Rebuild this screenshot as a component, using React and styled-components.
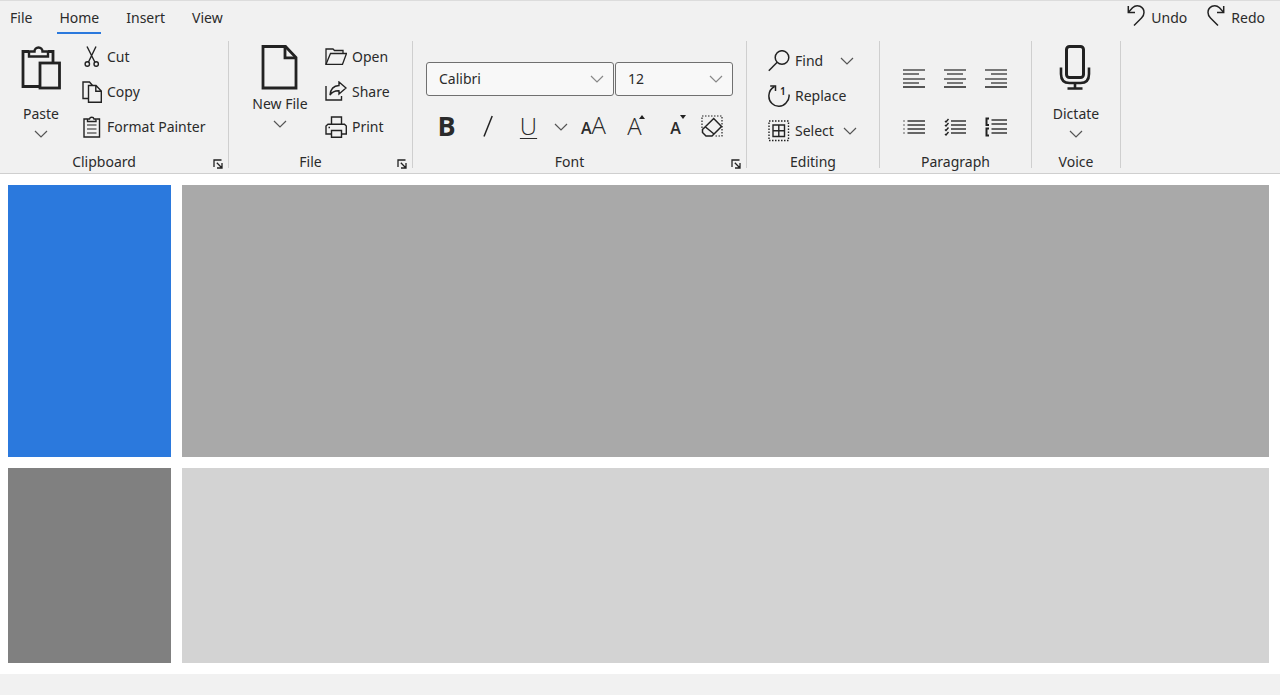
import React from "react";
import styled, { createGlobalStyle } from "styled-components";

const GlobalStyle = createGlobalStyle`
    *{
        box-sizing: border-box;
    }

    body{
        margin: 0;
        background: #f1f1f1;
        color: #2b2b2b;
        font-family: "Noto Sans", "Open Sans", sans-serif;
        font-size: 14px;
        line-height: 20px;
    }

    button, select{
        font: inherit;
        color: inherit;
        margin: 0;
        padding: 0;
        border: 0;
        background: none;
    }

    button{
        cursor: pointer;
    }
`;

function Svg({ w, h, sw = 1.5, children, ...rest }){
    return (
        <Drawing width={w} height={h} viewBox={`0 0 ${w} ${h}`} fill="none" stroke="#222" strokeWidth={sw} aria-hidden="true" {...rest}>
            {children}
        </Drawing>
    );
}

const Chevron = ({ color = "#555" }) => (
    <Svg w={14} h={8} sw={1.2} stroke={color}>
        <path d="M1 1L7 7L13 1" />
    </Svg>
);

const PasteIcon = () => (
    <Svg w={42} h={46} sw={2.8}>
        <path d="M19 42.5H3V7.5H9M28 7.5H33V18" />
        <path d="M9 7.5V12.5H28V7.5H22.5A4 4 0 0 0 14.5 7.5Z" strokeWidth="2.4" />
        <rect x="20" y="19" width="19.5" height="25" />
    </Svg>
);

const CutIcon = () => (
    <Svg w={20} h={22} sw={1.4}>
        <path d="M5 0.5L12.8 16M14 0.5L6.5 16" />
        <circle cx="5.3" cy="18" r="2.2" />
        <circle cx="14.2" cy="18" r="2.2" />
    </Svg>
);

const CopyIcon = () => (
    <Svg w={20} h={22} sw={1.4}>
        <path d="M6.5 17.5H1V1H7.5L10.5 4.5" />
        <path d="M6.5 4.5H14L19.3 10V21.3H6.5ZM13.8 4.5V10.2H19.3" />
    </Svg>
);

const FormatIcon = () => (
    <Svg w={20} h={22} sw={1.4}>
        <path d="M5 3H2V21H17.5V3H14.5" />
        <path d="M5.5 3V5.500H14V3H12A2.3 2.3 0 0 0 7.5 3Z" />
        <path d="M5 9H14.5M5 13H14.5M5 17H14.5" stroke="#666" />
    </Svg>
);

const NewFileIcon = () => (
    <Svg w={40} h={46} sw={2.8}>
        <path d="M3 2.5H25.5L36 13.5V44H3Z" />
        <path d="M25 2.5V13.8H36" />
    </Svg>
);

const OpenIcon = () => (
    <Svg w={22} h={22} sw={1.3}>
        <path d="M1 18V3H8L9.5 4.5H18V7.5" />
        <path d="M1 18.3L5.5 7.5H21.5L17.5 18.3Z" />
    </Svg>
);

const ShareIcon = () => (
    <Svg w={22} h={22} sw={1.4}>
        <path d="M1 5V19H16.5V15" />
        <path d="M14 1L21 7L14 13V9.8C9.5 9.6 7 11 5 14C5.5 8 9 4.8 14 4.5Z" />
    </Svg>
);

const PrintIcon = () => (
    <Svg w={22} h={22} sw={1.4}>
        <path d="M6.5 8V1H16.5V8" />
        <path d="M6.5 18H1V10L3 8.2H19.5L21.3 10V18H16.5" />
        <path d="M6.5 14.5H16.5V21.3H6.5Z" />
        <path d="M3.5 11.5H5" />
    </Svg>
);

const FindIcon = () => (
    <Svg w={22} h={22}>
        <circle cx="14" cy="7.5" r="6.8" />
        <path d="M9.2 12.3L0.8 20.8" />
    </Svg>
);

const ReplaceIcon = () => (
    <Svg w={22} h={24}>
        <path d="M6.5 2.5C-0.5 6.5-0.5 15.5 4 19.5C8 23.5 14.5 23 18 19C20.5 16.5 21.5 13.5 21 10.5" />
        <path d="M2.2 2H7.5V7" />
        <text x="12" y="11" fill="#222" stroke="none" fontSize="10" fontWeight="600">1</text>
    </Svg>
);

const SelectIcon = () => (
    <Svg w={22} h={22} sw={1.4}>
        <rect x="1" y="1" width="19.5" height="19.5" strokeDasharray="1.5 1.5" />
        <path d="M5 5H16.5V16.5H5ZM10.8 5V16.5M5 10.8H16.5" />
    </Svg>
);

const ItalicIcon = () => (
    <Svg w={12} h={22}>
        <path d="M2 21.5L10.2 1" />
    </Svg>
);

const EraserIcon = () => (
    <Svg w={22} h={22} sw={1.5}>
        <path d="M1 13V1H21V21H14" strokeWidth="1.2" strokeDasharray="1.5 1.5" />
        <path d="M1.5 14.5L12.7 3.5L20.5 11.5L11 21H5L1.5 17.5ZM4.5 12L13 19" />
    </Svg>
);

const MicIcon = () => (
    <Svg w={34} h={46} sw={3}>
        <rect x="7.500" y="2.5" width="17" height="31" rx="3" />
        <path d="M2 23.5V30Q2 39 10.500 39H21.500Q30 39 30 30V23.5M16 39V44.5M8.500 44.5H23.500" strokeWidth="2.6" />
    </Svg>
);

const UndoIcon = ({ flip }) => (
    <Svg w={18} h={24}>
        <g transform={flip ? "matrix(-1 0 0 1 18 0)" : undefined}>
            <path d="M1.3 2V8.5H8" />
            <path d="M1.5 8.3L5.5 3.8C10-0.5 17 2.5 17 8.5C17 11 16 12.5 14.5 14L7 21.5" />
        </g>
    </Svg>
);

const LauncherIcon = () => (
    <Svg w={10} h={10} sw={1.3}>
        <path d="M1 8V1H8.5M3.8 3.8L8.5 8.5M9 4V9H4" />
    </Svg>
);

// start x of the short lines for each alignment
const shortStart = { left: 1, center: 4, right: 7 };

const AlignIcon = ({ side }) => (
    <Svg w={24} h={20}>
        <path
            d={`M1 2H23M${shortStart[side]} 6H${shortStart[side] + 16}M1 11H23M${shortStart[side]} 15H${shortStart[side] + 16}`}
            stroke="#777"
            strokeWidth="2"
        />
        <path d="M1 19H23" />
    </Svg>
);

const BulletIcon = () => (
    <Svg w={24} h={18} sw={2} stroke="#666">
        <path d="M1 3H3M1 7H3M1 11H3M1 15H3" stroke="#aaa" />
        <path d="M5.5 3H23M5.5 7H23M5.5 11H23M5.5 15H23" />
    </Svg>
);

const CheckListIcon = () => (
    <Svg w={24} h={18} sw={2} stroke="#666">
        <path d="M2 3L3 4L5.5 1M2 7L3 8L5.5 5M2 11.5L3 12.5L5.5 9.5M2 16L3 17L5.5 14" stroke="#222" strokeWidth="1.4" />
        <path d="M8 3H23M8 7H23M8 11H23M8 15H23" />
    </Svg>
);

const SpacingIcon = () => (
    <Svg w={24} h={20} sw={2} stroke="#666">
        <path d="M5 1.5H2.5V8H5M5 11.5H2.5V18.5H5" stroke="#222" />
        <path d="M7.5 3H23M7.5 7H23M7.5 12H23M7.5 16H23" />
    </Svg>
);

const Triangle = ({ down }) => (
    <Svg w={6} h={4} stroke="none" fill="#222">
        <path d={down ? "M0 0H6L3 4Z" : "M0 4H6L3 0Z"} />
    </Svg>
);


function Group({ title, width, launcher, children }){
    return (
        <GroupBox $width={width} aria-label={title}>
            <GroupBody>{children}</GroupBody>
            <GroupFooter>
                <GroupTitle>{title}</GroupTitle>
                {launcher && (
                    <Launcher type="button" aria-label={`${title} options`}>
                        <LauncherIcon />
                    </Launcher>
                )}
            </GroupFooter>
        </GroupBox>
    );
}

function Command({ icon, label, menu }){
    return (
        <SmallButton type="button">
            {icon}
            <CommandLabel $menu={menu}>{label}</CommandLabel>
            {menu && <Chevron />}
        </SmallButton>
    );
}

function Big({ icon, label, tight }){
    return (
        <BigButton type="button" $tight={tight}>
            {icon}
            <span>{label}</span>
            <Chevron />
        </BigButton>
    );
}

function Combo({ label, options, grow }){
    return (
        <ComboBox $grow={grow}>
            <select aria-label={label} defaultValue={options[0]}>
                {options.map((o) => <option key={o}>{o}</option>)}
            </select>
            <Chevron color="#888" />
        </ComboBox>
    );
}

function App(){
    const tabs = ["File", "Home", "Insert", "View"];

    return (
        <Page>
            <GlobalStyle />
            <Header>
                <TopBar>
                    <Tabs>
                        {tabs.map((t) => (
                            <Tab type="button" key={t} $active={t === "Home"}>{t}</Tab>
                        ))}
                    </Tabs>
                    <History>
                        <HistoryButton type="button"><UndoIcon />Undo</HistoryButton>
                        <HistoryButton type="button"><UndoIcon flip />Redo</HistoryButton>
                    </History>
                </TopBar>

                <Ribbon>
                    <Group title="Clipboard" width={229} launcher>
                        <BigSlot $width={82}><Big icon={<PasteIcon />} label="Paste" /></BigSlot>
                        <Commands>
                            <Command icon={<CutIcon />} label="Cut" />
                            <Command icon={<CopyIcon />} label="Copy" />
                            <Command icon={<FormatIcon />} label="Format Painter" />
                        </Commands>
                    </Group>

                    <Group title="File" width={184} launcher>
                        <BigSlot $width={96} $left={6}><Big icon={<NewFileIcon />} label="New File" tight /></BigSlot>
                        <Commands>
                            <Command icon={<OpenIcon />} label="Open" />
                            <Command icon={<ShareIcon />} label="Share" />
                            <Command icon={<PrintIcon />} label="Print" />
                        </Commands>
                    </Group>

                    <Group title="Font" width={334} launcher>
                        <FontPanel>
                            <ComboRow>
                                <Combo label="Font family" options={["Calibri", "Arial", "Georgia"]} grow={188} />
                                <Combo label="Font size" options={["12", "14", "16"]} grow={118} />
                            </ComboRow>
                            <ToolRow>
                                <Tool type="button" aria-label="Bold"><Glyph $size={27} $weight={700}>B</Glyph></Tool>
                                <Tool type="button" aria-label="Italic"><ItalicIcon /></Tool>
                                <Tool type="button" aria-label="Underline"><Glyph $line>U</Glyph></Tool>
                                <Tool type="button" aria-label="Underline styles" $menu><Chevron /></Tool>
                                <Tool type="button" aria-label="Change case">
                                    <Glyph><SmallGlyph>A</SmallGlyph>A</Glyph>
                                </Tool>
                                <Tool type="button" aria-label="Grow font">
                                    <Glyph>A</Glyph>
                                    <Corner><Triangle /></Corner>
                                </Tool>
                                <Tool type="button" aria-label="Shrink font">
                                    <Glyph><SmallGlyph>A</SmallGlyph></Glyph>
                                    <Corner><Triangle down /></Corner>
                                </Tool>
                                <Tool type="button" aria-label="Clear formatting" $width={32}><EraserIcon /></Tool>
                            </ToolRow>
                        </FontPanel>
                    </Group>

                    <Group title="Editing" width={133}>
                        <Commands $left={21} $top={4}>
                            <Command icon={<FindIcon />} label="Find" menu />
                            <Command icon={<ReplaceIcon />} label="Replace" />
                            <Command icon={<SelectIcon />} label="Select" menu />
                        </Commands>
                    </Group>

                    <Group title="Paragraph" width={152}>
                        <ToolGrid>
                            <Tool type="button" aria-label="Align left"><AlignIcon side="left" /></Tool>
                            <Tool type="button" aria-label="Center"><AlignIcon side="center" /></Tool>
                            <Tool type="button" aria-label="Align right"><AlignIcon side="right" /></Tool>
                            <Tool type="button" aria-label="Bullets"><BulletIcon /></Tool>
                            <Tool type="button" aria-label="Checklist"><CheckListIcon /></Tool>
                            <Tool type="button" aria-label="Line spacing"><SpacingIcon /></Tool>
                        </ToolGrid>
                    </Group>

                    <Group title="Voice" width={89}>
                        <BigSlot $width={88}><Big icon={<MicIcon />} label="Dictate" /></BigSlot>
                    </Group>
                </Ribbon>
            </Header>

            <Content>
                <Pane $color="#2b79dd" />
                <Pane $color="#a9a9a9" />
                <Pane $color="#808080" />
                <Pane $color="#d3d3d3" />
            </Content>
            <StatusBar />
        </Page>
    );
}

export default App;


const Drawing = styled.svg`
    display: block;
    flex: none;
`;

const Page = styled.div`
    min-height: 100vh;
    display: flex;
    flex-direction: column;
`;

const Header = styled.header`
    background: #f1f1f1;
    border-top: 1px solid #dcdcdc;
    border-bottom: 1px solid #cfcfcf;
`;

const TopBar = styled.div`
    display: flex;
    justify-content: space-between;
    align-items: flex-start;
    padding: 0 15px 0 8px;
    height: 40px;
`;

const Tabs = styled.nav`
    display: flex;
    gap: 23px;
`;

const Tab = styled.button`
    padding: 7px 2px 4px;
    border-bottom: 2px solid ${(props) => (props.$active ? "#2b79dd" : "transparent")};
`;

const History = styled.div`
    display: flex;
    gap: 20px;
`;

const HistoryButton = styled.button`
    display: flex;
    align-items: flex-start;
    gap: 6px;
    padding-top: 3px;
    line-height: 28px;
`;

const Ribbon = styled.div`
    display: flex;
    padding-bottom: 5px;
`;

const GroupBox = styled.section`
    flex: none;
    width: ${(props) => props.$width}px;
    display: flex;
    flex-direction: column;
    border-right: 1px solid #cfcfcf;
`;

const GroupBody = styled.div`
    display: flex;
    height: 111px;
`;

const GroupFooter = styled.div`
    display: flex;
    align-items: flex-start;
    height: 16px;
`;

const GroupTitle = styled.span`
    flex: 1;
    text-align: center;
    line-height: 20px;
`;

const Launcher = styled.button`
    width: 20px;
    display: flex;
    justify-content: center;
    padding-top: 7px;
`;

const BigSlot = styled.div`
    width: ${(props) => props.$width}px;
    padding-left: ${(props) => props.$left || 0}px;
    display: flex;
    justify-content: center;
`;

const BigButton = styled.button`
    display: flex;
    flex-direction: column;
    align-items: center;
    height: 100px;
    padding-top: 3px;
    white-space: nowrap;

    span{
        margin: ${(props) => (props.$tight ? 4 : 14)}px 0 6px;
    }
`;

const Commands = styled.div`
    display: flex;
    flex-direction: column;
    padding-left: ${(props) => props.$left || 0}px;
    padding-top: ${(props) => props.$top || 0}px;
`;

const SmallButton = styled.button`
    display: flex;
    align-items: center;
    gap: 5px;
    height: 35px;
    padding-bottom: 4px;
    white-space: nowrap;
`;

const CommandLabel = styled.span`
    min-width: 36px;
    text-align: left;
    margin-right: ${(props) => (props.$menu ? 4 : 0)}px;
`;

const FontPanel = styled.div`
    flex: 1;
    padding: 21px 13px 0;
`;

const ComboRow = styled.div`
    display: flex;
    gap: 1px;
`;

const ComboBox = styled.div`
    flex: ${(props) => props.$grow} 1 0;
    display: grid;
    align-items: center;

    select{
        grid-area: 1 / 1;
        appearance: none;
        width: 100%;
        height: 34px;
        padding: 0 32px 0 12px;
        border: 1px solid #707070;
        border-radius: 3px;
        background: #f8f8f8;
    }

    svg{
        grid-area: 1 / 1;
        justify-self: end;
        margin-right: 10px;
        pointer-events: none;
    }
`;

const ToolRow = styled.div`
    display: flex;
    height: 60px;
`;

const ToolGrid = styled.div`
    flex: 1;
    display: grid;
    grid-template-columns: repeat(3, 41px);
    grid-auto-rows: 49px;
    justify-content: center;
    padding: 12px 1px 0 0;
`;

const Tool = styled.button`
    width: ${(props) => (props.$menu ? 24 : props.$width || 41)}px;
    padding-top: ${(props) => (props.$menu ? 2 : 0)}px;
    display: flex;
    align-items: center;
    justify-content: center;
    position: relative;
`;

const Glyph = styled.span`
    font-family: "Open Sans", "Noto Sans", sans-serif;
    font-size: ${(props) => props.$size || 24}px;
    font-weight: ${(props) => props.$weight || 300};
    line-height: 24px;
    ${(props) => props.$line && "text-decoration: underline 1px; text-underline-offset: 3px;"}
`;

const SmallGlyph = styled.span`
    font-size: 16px;
    font-weight: 600;
`;

const Corner = styled.span`
    position: absolute;
    top: 19px;
    right: 10px;
`;

const Content = styled.main`
    flex: 1;
    display: grid;
    grid-template-columns: 163px 1fr;
    grid-template-rows: 7fr 5fr;
    gap: 11px;
    padding: 11px 11px 11px 8px;
    background: #fff;
`;

const Pane = styled.section`
    background: ${(props) => props.$color};
`;

const StatusBar = styled.footer`
    height: 21px;
    background: #f1f1f1;
`;
